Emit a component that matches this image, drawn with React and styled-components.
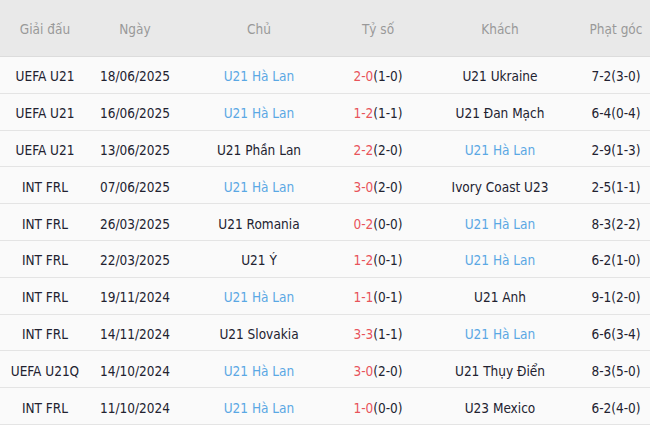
import React from "react";
import styled, { createGlobalStyle } from "styled-components";

const GlobalStyle = createGlobalStyle`
  body {
    margin: 0;
    background: #fff;
    font-family: "DejaVu Sans Condensed", "DejaVu Sans", sans-serif;
  }
`;

// column widths, left to right
const cols = "90px 90px 158px 80px 164px 68px";

const matches = [
  { league: "UEFA U21", date: "18/06/2025", home: "U21 Hà Lan", ft: "2-0", ht: "(1-0)", away: "U21 Ukraine", corner: "7-2(3-0)", nl: "home" },
  { league: "UEFA U21", date: "16/06/2025", home: "U21 Hà Lan", ft: "1-2", ht: "(1-1)", away: "U21 Đan Mạch", corner: "6-4(0-4)", nl: "home" },
  { league: "UEFA U21", date: "13/06/2025", home: "U21 Phần Lan", ft: "2-2", ht: "(2-0)", away: "U21 Hà Lan", corner: "2-9(1-3)", nl: "away" },
  { league: "INT FRL", date: "07/06/2025", home: "U21 Hà Lan", ft: "3-0", ht: "(2-0)", away: "Ivory Coast U23", corner: "2-5(1-1)", nl: "home" },
  { league: "INT FRL", date: "26/03/2025", home: "U21 Romania", ft: "0-2", ht: "(0-0)", away: "U21 Hà Lan", corner: "8-3(2-2)", nl: "away" },
  { league: "INT FRL", date: "22/03/2025", home: "U21 Ý", ft: "1-2", ht: "(0-1)", away: "U21 Hà Lan", corner: "6-2(1-0)", nl: "away" },
  { league: "INT FRL", date: "19/11/2024", home: "U21 Hà Lan", ft: "1-1", ht: "(0-1)", away: "U21 Anh", corner: "9-1(2-0)", nl: "home" },
  { league: "INT FRL", date: "14/11/2024", home: "U21 Slovakia", ft: "3-3", ht: "(1-1)", away: "U21 Hà Lan", corner: "6-6(3-4)", nl: "away" },
  { league: "UEFA U21Q", date: "14/10/2024", home: "U21 Hà Lan", ft: "3-0", ht: "(2-0)", away: "U21 Thụy Điển", corner: "8-3(5-0)", nl: "home" },
  { league: "INT FRL", date: "11/10/2024", home: "U21 Hà Lan", ft: "1-0", ht: "(0-0)", away: "U23 Mexico", corner: "6-2(4-0)", nl: "home" },
];

const App = () => {
  return (
    <>
      <GlobalStyle />
      <Table>
        <HeadRow>
          <HeadCell>Giải đấu</HeadCell>
          <HeadCell>Ngày</HeadCell>
          <HeadCell>Chủ</HeadCell>
          <HeadCell>Tỷ số</HeadCell>
          <HeadCell>Khách</HeadCell>
          <HeadCell>Phạt góc</HeadCell>
        </HeadRow>
        {matches.map((m, i) => (
          <Row key={i}>
            <Cell>{m.league}</Cell>
            <Cell>{m.date}</Cell>
            <Cell $team={m.nl === "home"}>{m.home}</Cell>
            <Cell>
              <Score>{m.ft}</Score>
              {m.ht}
            </Cell>
            <Cell $team={m.nl === "away"}>{m.away}</Cell>
            <Cell>{m.corner}</Cell>
          </Row>
        ))}
      </Table>
    </>
  );
};

export default App;

const Table = styled.div`
  width: 650px;
  display: flex;
  flex-direction: column;
`;

const HeadRow = styled.div`
  display: grid;
  grid-template-columns: ${cols};
  height: 56px;
  background: #e9e9e9;
  border-bottom: 1px solid #dcdcdc;
`;

const HeadCell = styled.div`
  display: flex;
  align-items: center;
  justify-content: center;
  padding-top: 1px;
  color: #999;
  font-size: 13.5px;
`;

const Row = styled.div`
  display: grid;
  grid-template-columns: ${cols};
  height: 35.8px;
  background: #fafafa;
  border-bottom: 1px solid #e4e4e4;
`;

const Cell = styled.div`
  display: flex;
  align-items: center;
  justify-content: center;
  padding-top: 3px;
  white-space: nowrap;
  color: ${(p) => (p.$team ? "#5aa8e4" : "#222230")};
  font-size: 13.5px;
`;

const Score = styled.span`
  color: #e8545a;
`;
